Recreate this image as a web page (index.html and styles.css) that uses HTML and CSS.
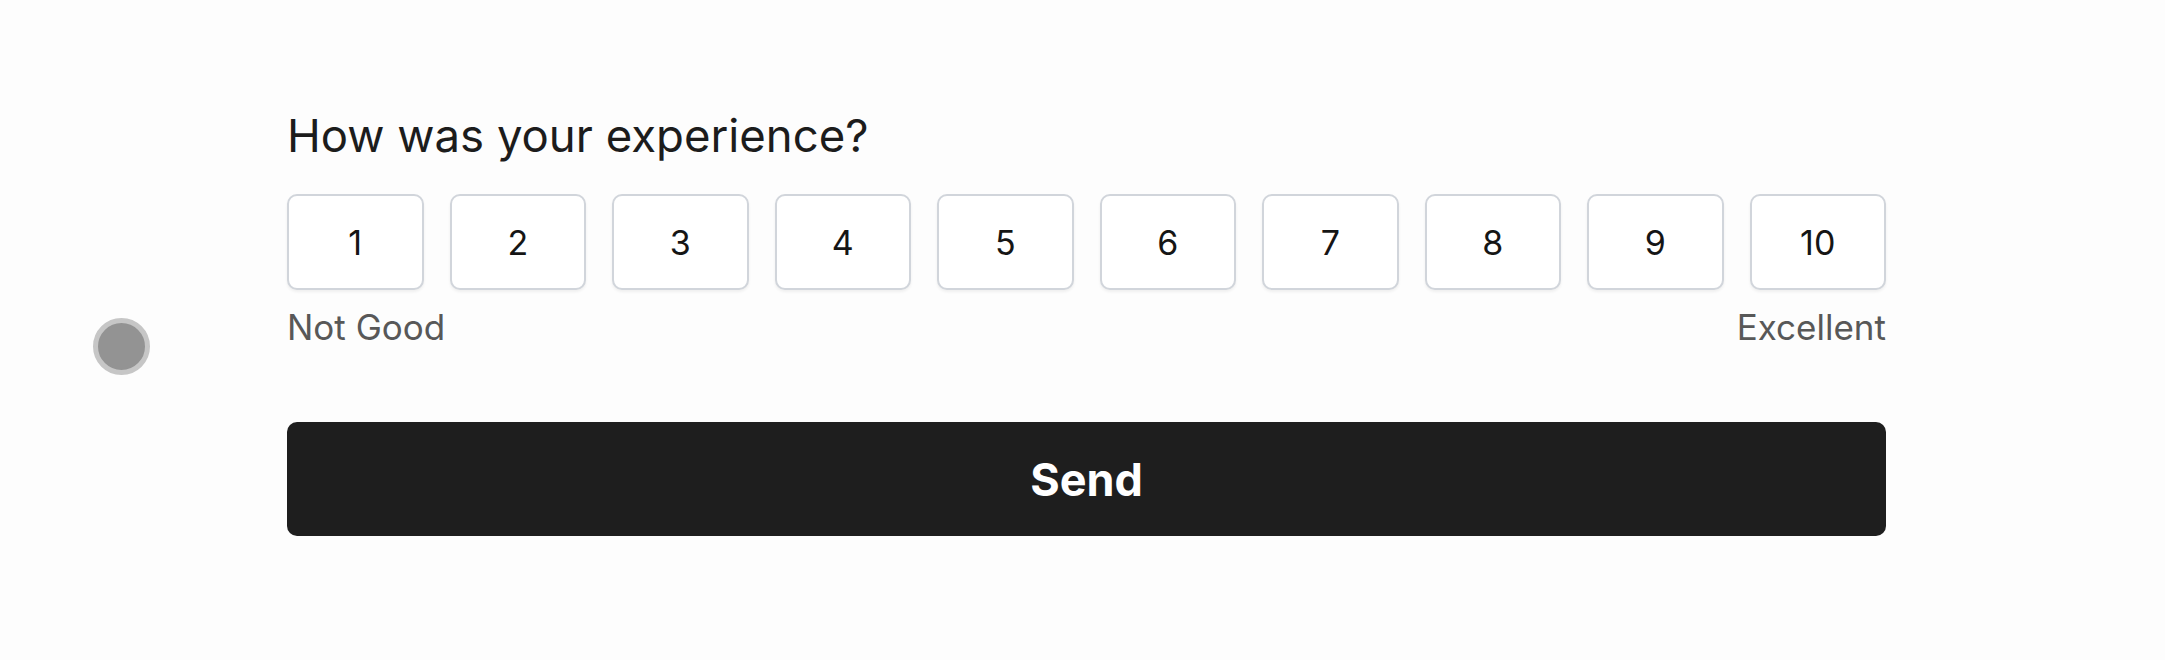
FILE: index.html
```html
<!DOCTYPE html>
<html lang="en">
<head>
  <meta charset="UTF-8" />
  <meta name="viewport" content="width=device-width, initial-scale=1.0" />
  <title>Feedback</title>
  <link rel="stylesheet" href="styles.css">
</head>
<body>

  <div class="cursor-dot"></div>

  <div class="main-content">
    <form class="rating-form" id="ratingForm">
      <h2>How was your experience?</h2>

      <div class="scale">
        <button type="button" class="score">1</button>
        <button type="button" class="score">2</button>
        <button type="button" class="score">3</button>
        <button type="button" class="score">4</button>
        <button type="button" class="score">5</button>
        <button type="button" class="score">6</button>
        <button type="button" class="score">7</button>
        <button type="button" class="score">8</button>
        <button type="button" class="score">9</button>
        <button type="button" class="score">10</button>
      </div>

      <div class="scale-labels">
        <span>Not Good</span>
        <span>Excellent</span>
      </div>

      <button type="submit" class="send-btn">Send</button>
    </form>
  </div>

</body>
</html>
```

FILE: styles.css
```css
/* Global Styles */
* {
  box-sizing: border-box;
  margin: 0;
  padding: 0;
  font-family: Inter, "Noto Sans", Arial, sans-serif;
}
body {
  background: #fdfdfd;
  color: #1c1c1c;
  min-height: 100vh;
}

/* Main Content Wrapper */
.main-content {
  padding: 108px 0 0 287px;
}

.rating-form {
  width: 1599px;
}
h2 {
  font-size: 45.5px;
  font-weight: 400;
  line-height: 56px;
  color: #1c1c1c;
  margin-bottom: 30px;
}

.scale {
  display: flex;
  gap: 26px;
}
.score {
  flex: 1;
  height: 96px;
  background: #fff;
  border: 2px solid #d1d5db;
  border-radius: 10px;
  box-shadow: 0 2px 3px rgba(0, 0, 0, 0.06);
  font-size: 34px;
  color: #151515;
  cursor: pointer;
}

.scale-labels {
  display: flex;
  justify-content: space-between;
  margin-top: 15px;
  font-size: 35px;
  line-height: 44px;
  color: #585858;
}

.send-btn {
  display: block;
  width: 100%;
  height: 114px;
  margin-top: 73px;
  background: #1e1e1e;
  color: #fff;
  border: none;
  border-radius: 10px;
  font-size: 45px;
  font-weight: 700;
  cursor: pointer;
}

/* grey pointer dot floating over the page */
.cursor-dot {
  position: absolute;
  left: 93px;
  top: 318px;
  width: 57px;
  height: 57px;
  border-radius: 50%;
  background: #939393;
  border: 5px solid #c6c6c6;
}
```
